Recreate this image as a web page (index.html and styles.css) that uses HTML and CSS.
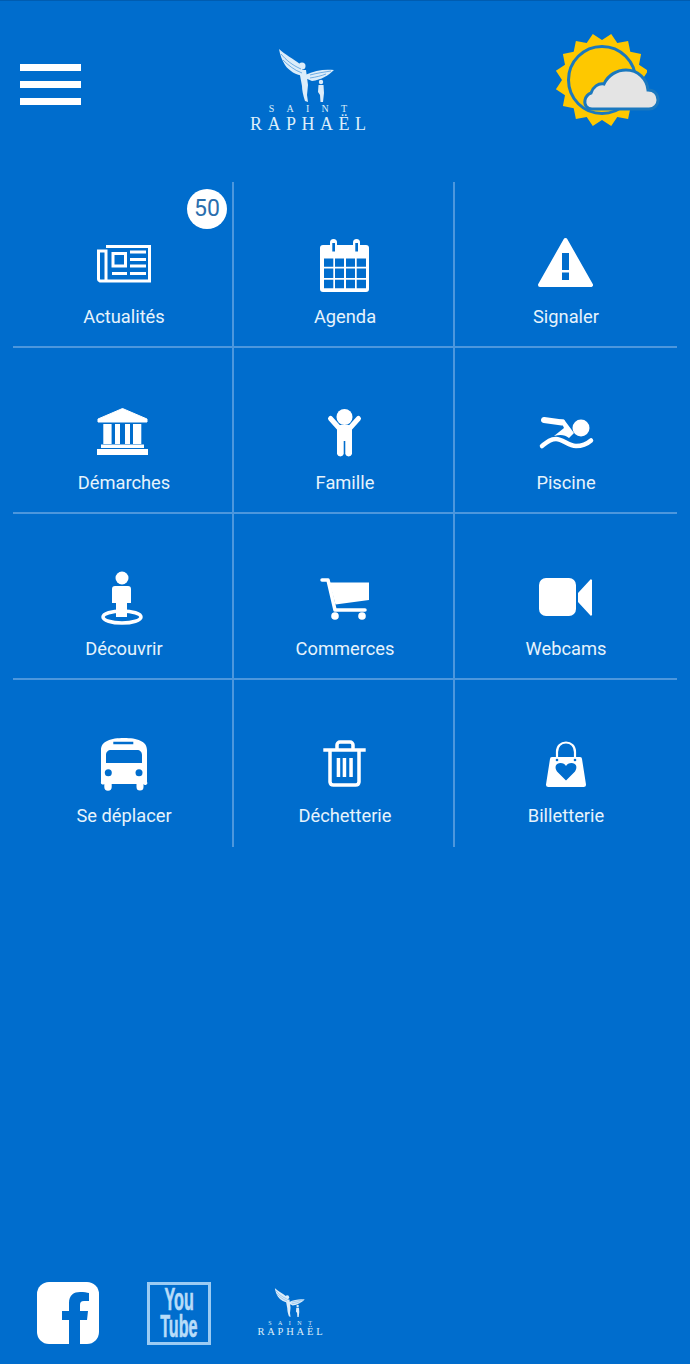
FILE: index.html
```html
<!DOCTYPE html>
<html lang="fr">
<head>
<meta charset="utf-8">
<title>Saint-Raphaël</title>
<link rel="stylesheet" href="styles.css">
</head>
<body>
<svg class="defs" width="0" height="0" aria-hidden="true">
  <defs>
    <symbol id="angel" viewBox="0 0 56 55">
      <g fill="#dcedfa">
        <path d="M0 0C6 6 14 9 22 16L25 27C17 26 10 22 6 16 3 11 1 6 0 0Z"/>
        <circle cx="23" cy="17" r="3.500"/>
        <path d="M26 26C36 21 46 20 55 21 50 26 42 31 33 32L26 29Z"/>
        <path d="M20 21H27L29 36 28 46 29 53 26 52C24 46 23 41 23 37Z"/>
        <circle cx="42" cy="33" r="2.200"/>
        <path d="M39.500 36H44.500L45 44 44 53H41.500L41 46 39 43Z"/>
      </g>
      <g fill="none" stroke="#006dcd" stroke-width=".5">
        <path d="M2 5C7 11 13 16 22 20"/>
        <path d="M4 11C9 16 15 21 23 24"/>
        <path d="M31 26C38 24 46 23 52 22"/>
        <path d="M31 29C37 28 42 27 47 25"/>
      </g>
    </symbol>
  </defs>
</svg>
<main class="page">
  <header class="top">
    <button class="burger" aria-label="Menu"><span></span><span></span><span></span></button>
    <div class="logo">
      <svg class="angel" viewBox="0 0 56 55"><use href="#angel"/></svg>
      <div class="saint">SAINT</div>
      <div class="raphael">RAPHAËL</div>
    </div>
    <svg class="weather" viewBox="0 0 110 100">
      <polygon transform="translate(48 47)" fill="#fec800" points="0,-40 9.2,-46.1 15.3,-37 26.1,-39.1 28.3,-28.3 39.1,-26.1 37,-15.3 46.1,-9.2 40,0 46.1,9.2 37,15.3 39.1,26.1 28.3,28.3 26.1,39.1 15.3,37 9.2,46.1 0,40 -9.2,46.1 -15.3,37 -26.1,39.1 -28.3,28.3 -39.1,26.1 -37,15.3 -46.1,9.2 -40,0 -46.1,-9.2 -37,-15.3 -39.1,-26.1 -28.3,-28.3 -26.1,-39.1 -15.3,-37 -9.2,-46.1"/>
      <circle cx="48" cy="47" r="33.500" fill="#fec800" stroke="#1a78bf" stroke-width="3"/>
      <rect x="76" y="76" width="34" height="24" fill="#006dcd"/>
      <rect x="93" y="36" width="17" height="42" fill="#006dcd"/>
      <path d="M38 76C33 76 30 72 31 67 32 63 34 61 37 60 39 54 44 50 50 51 54 42 63 37 72 37 84 37 93 46 94 57 100 57 104 61 104 67 104 72 100 76 95 76Z" fill="#e4e4e4" stroke="#1a78bf" stroke-width="3"/>
    </svg>
  </header>

  <nav class="grid">
    <a class="cell">
      <span class="badge">50</span>
      <svg class="icon" viewBox="0 0 60 60">
        <g fill="none" stroke="#fff" stroke-width="3">
          <path d="M12 11.500H55.500V46H6A2 2 0 0 1 4.500 44V16H12V46"/>
          <rect x="19" y="18.500" width="12.500" height="12.500"/>
        </g>
        <path d="M36 17H52M36 24.500H52M36 31H52M18 38.500H33M36 38.500H52" stroke="#fff" stroke-width="3"/>
      </svg>
      <span class="label">Actualités</span>
    </a>
    <a class="cell">
      <svg class="icon" viewBox="0 0 60 60">
        <path d="M5 13A3 3 0 0 1 8 10H51A3 3 0 0 1 54 13V54A3 3 0 0 1 51 57H8A3 3 0 0 1 5 54Z" fill="#fff"/>
        <rect x="15" y="4" width="7" height="14" rx="3.500" fill="#fff"/>
        <rect x="38" y="4" width="7" height="14" rx="3.500" fill="#fff"/>
        <path d="M17.300 8H20V16.500H17.300ZM40.300 8H43V16.500H40.300Z" fill="#006dcd"/>
        <path d="M9 23.500H18.300V31.700H9ZM20 23.500H29V31.700H20ZM31 23.500H40V31.700H31ZM41.700 23.500H51V31.700H41.700ZM9 33.500H18.300V43H9ZM20 33.500H29V43H20ZM31 33.500H40V43H31ZM41.700 33.500H51V43H41.700ZM9 44.700H18.300V53.300H9ZM20 44.700H29V53.300H20ZM31 44.700H40V53.300H31ZM41.700 44.700H51V53.300H41.700Z" fill="#006dcd"/>
      </svg>
      <span class="label">Agenda</span>
    </a>
    <a class="cell">
      <svg class="icon" viewBox="0 0 60 60">
        <path d="M29.500 5 55 50H4Z" fill="#fff" stroke="#fff" stroke-width="4" stroke-linejoin="round"/>
        <path d="M26 18H33V35H26ZM26 37.500H33V45H26Z" fill="#006dcd"/>
      </svg>
      <span class="label">Signaler</span>
    </a>

    <a class="cell">
      <svg class="icon" viewBox="0 0 60 60">
        <path d="M28.500 7.500 53 18V21H4V18Z" fill="#fff" stroke="#fff" stroke-linejoin="round"/>
        <path d="M9.300 23H17.600V43H9.300ZM21 23H26V43H21ZM31 23H36V43H31ZM39 23H47.300V43H39ZM7 43.500H50V47H7ZM3 48H54V54H3Z" fill="#fff"/>
      </svg>
      <span class="label">Démarches</span>
    </a>
    <a class="cell">
      <svg class="icon" viewBox="0 0 60 60">
        <circle cx="29.500" cy="16" r="8" fill="#fff"/>
        <path d="M15.500 17.500 24 27M43.500 17.500 35 27" stroke="#fff" stroke-width="5" stroke-linecap="round"/>
        <path d="M22 27A4 4 0 0 1 26 24H33A4 4 0 0 1 37 27V53A3.500 3.500 0 0 1 30.300 53V40H28.700V53A3.500 3.500 0 0 1 22 53Z" fill="#fff"/>
      </svg>
      <span class="label">Famille</span>
    </a>
    <a class="cell">
      <svg class="icon" viewBox="0 0 60 60">
        <circle cx="45" cy="27" r="8.500" fill="#fff"/>
        <path d="M8 19 26 21.500" stroke="#fff" stroke-width="6" stroke-linecap="round"/>
        <path d="M24 18.500H28L38 32 33 37C29 34 25 33 18 35L28 27Z" fill="#fff"/>
        <path d="M6 45C11 41 14 38 20 38 27 38 32 45 40 45 46 45 51 43 55 39.500" fill="none" stroke="#fff" stroke-width="4.500" stroke-linecap="round"/>
      </svg>
      <span class="label">Piscine</span>
    </a>

    <a class="cell">
      <svg class="icon" viewBox="0 0 60 60">
        <circle cx="28" cy="11" r="6.500" fill="#fff"/>
        <ellipse cx="28" cy="50" rx="19" ry="6" fill="none" stroke="#fff" stroke-width="3.500"/>
        <path d="M18 22A3 3 0 0 1 21 19H34A3 3 0 0 1 37 22V36H33V50H22V36H18Z" fill="#fff"/>
      </svg>
      <span class="label">Découvrir</span>
    </a>
    <a class="cell">
      <svg class="icon" viewBox="0 0 60 60">
        <path d="M7 13H13L20 43H50" fill="none" stroke="#fff" stroke-width="3.500" stroke-linecap="round" stroke-linejoin="round"/>
        <path d="M14.500 15.500H54V33L20.500 37.500Z" fill="#fff"/>
        <circle cx="20" cy="49" r="3.800" fill="#fff"/>
        <circle cx="47" cy="49" r="3.800" fill="#fff"/>
      </svg>
      <span class="label">Commerces</span>
    </a>
    <a class="cell">
      <svg class="icon" viewBox="0 0 60 60">
        <rect x="3" y="11" width="37" height="38" rx="7" fill="#fff"/>
        <path d="M42 26 54 13A1 1 0 0 1 56 14V47A1 1 0 0 1 54 48L42 35Z" fill="#fff"/>
      </svg>
      <span class="label">Webcams</span>
    </a>

    <a class="cell">
      <svg class="icon" viewBox="0 0 60 60">
        <path d="M7 17C7 8 17 5 30 5 43 5 53 8 53 17V49A2 2 0 0 1 49.500 51V54A3.500 3.500 0 0 1 42.500 54V51H17.700V54A3.500 3.500 0 0 1 10.300 54V51A2 2 0 0 1 7 49Z" fill="#fff"/>
        <path d="M12 22C12 19 14 17 17 17H43C46 17 48 19 48 22V30H12ZM19.300 8.700H39.300V11.300H19.300Z" fill="#006dcd"/>
        <circle cx="14.300" cy="39.700" r="3.500" fill="#006dcd"/>
        <circle cx="45" cy="39.700" r="3.500" fill="#006dcd"/>
      </svg>
      <span class="label">Se déplacer</span>
    </a>
    <a class="cell">
      <svg class="icon" viewBox="0 0 60 60">
        <g fill="none" stroke="#fff" stroke-width="3.500">
          <path d="M8.300 17H50.700"/>
          <path d="M22 17V12A3 3 0 0 1 25 9H35A3 3 0 0 1 38 12V17"/>
          <path d="M15 18V49A3.500 3.500 0 0 0 18.500 52H40.500A3.500 3.500 0 0 0 44 49V18"/>
        </g>
        <path d="M21.700 25H25.200V44H21.700ZM27.700 25H31.200V44H27.700ZM34.300 25H37.800V44H34.300Z" fill="#fff"/>
      </svg>
      <span class="label">Déchetterie</span>
    </a>
    <a class="cell">
      <svg class="icon" viewBox="0 0 60 60">
        <path d="M16 24H44A2 2 0 0 1 46 26L50 51.500A2.500 2.500 0 0 1 47.500 54H12.500A2.500 2.500 0 0 1 10 51.500L14 26A2 2 0 0 1 16 24Z" fill="#fff"/>
        <path d="M21 27V19C21 13 25 9.500 30 9.500 35 9.500 39 13 39 19V27" fill="none" stroke="#fff" stroke-width="2.200"/>
        <circle cx="21" cy="27" r="1.300" fill="#006dcd"/>
        <circle cx="39" cy="27" r="1.300" fill="#006dcd"/>
        <path d="M30 47.500 21 38.500C18 34 20 30 24.500 30 27 30 29 31 30 33 31 31 33 30 35.500 30 40 30 42 34 39 38.500Z" fill="#006dcd"/>
      </svg>
      <span class="label">Billetterie</span>
    </a>
  </nav>

  <footer class="foot">
    <svg class="fb" viewBox="0 0 62 62">
      <rect width="62" height="62" rx="12" fill="#fff"/>
      <path d="M32 62V38H25V29H32V21C32 13 37 10 43 10 47 10 50 10.500 52 11V19H47C44 19 43 20.500 43 23V29H51L50 38H43V62Z" fill="#006dcd"/>
    </svg>
    <div class="yt"><span class="yt-word">You</span><span class="yt-word">Tube</span></div>
    <div class="logo logo-small">
      <svg class="angel" viewBox="0 0 56 55"><use href="#angel"/></svg>
      <div class="saint">SAINT</div>
      <div class="raphael">RAPHAËL</div>
    </div>
  </footer>
</main>
</body>
</html>
```

FILE: styles.css
```css
* { box-sizing: border-box; }
html, body { margin: 0; padding: 0; }
body { background: #006dcd; }
.defs { position: absolute; }
.page {
  height: 1364px;
  display: flex;
  flex-direction: column;
  background: #006dcd;
  border-top: 1px solid #005cb0;
  overflow: hidden;
}
.top {
  height: 181px;
  flex: none;
  display: flex;
  align-items: flex-start;
  justify-content: space-between;
  padding: 31px 26px 0 20px;
}
.burger {
  width: 61px;
  margin: 32px 0 0;
  padding: 0;
  border: 0;
  background: none;
  display: flex;
  flex-direction: column;
  gap: 10px;
}
.burger span { display: block; height: 7px; background: #fff; }
.logo {
  width: 116px;
  margin-top: 17px;
  margin-left: -19px;
  display: flex;
  flex-direction: column;
  align-items: center;
  color: #dcedfa;
  font-family: "Liberation Serif", serif;
}
.angel { display: block; width: 56px; height: 55px; margin-left: -2px; }
.saint { font-size: 10px; line-height: 10px; letter-spacing: 12.2px; margin-right: -12px; }
.raphael { font-size: 18px; line-height: 17px; letter-spacing: 5.5px; margin-right: -5.5px; margin-top: 2px; white-space: nowrap; }
.weather { display: block; width: 110px; height: 100px; margin-top: 1px; }
.grid {
  width: 664px;
  margin-left: 13px;
  flex: none;
  display: grid;
  grid-template-columns: 221px 221px 222px;
  grid-template-rows: 166px 166px 166px 167px;
}
.cell {
  position: relative;
  display: flex;
  flex-direction: column;
  align-items: center;
  padding-top: 53px;
  padding-left: 3px;
  border-right: 2px solid #4c97dd;
  border-bottom: 2px solid #4c97dd;
}
.cell:nth-child(3n) { border-right: 0; padding-left: 0; }
.cell:nth-last-child(-n+3) { border-bottom: 0; }
.icon { display: block; width: 60px; height: 60px; flex: none; }
.label {
  margin-top: 11px;
  color: #e6f3fc;
  font: 400 18.3px/22px Roboto, sans-serif;
  white-space: nowrap;
}
.cell:nth-last-child(-n+3) .label { margin-top: 12px; }
.badge {
  position: absolute;
  top: 7px;
  right: 5px;
  width: 40px;
  height: 40px;
  border-radius: 50%;
  background: #fff;
  color: #2a6ead;
  font: 400 23px/40px Roboto, sans-serif;
  text-align: center;
}
.foot {
  margin-top: auto;
  height: 82px;
  flex: none;
  display: flex;
  align-items: flex-start;
  padding-left: 37px;
}
.fb { display: block; width: 62px; height: 62px; flex: none; }
.yt {
  width: 64px;
  height: 63px;
  margin-left: 48px;
  flex: none;
  border: 3px solid #9bcbf3;
  display: flex;
  flex-direction: column;
  align-items: center;
  padding-top: 1px;
}
.yt-word {
  color: #b8dcf9;
  font: 700 31px/27px "Liberation Sans", sans-serif;
  -webkit-text-stroke: .7px #b8dcf9;
  transform: scaleX(.52);
  white-space: nowrap;
  height: 27px;
}
.logo-small {
  width: 66px;
  margin: 6px 0 0 46px;
}
.logo-small .angel { width: 32px; height: 30px; margin-left: 0; }
.logo-small .saint { font-size: 6px; line-height: 6px; letter-spacing: 6.5px; margin-right: -6.5px; margin-top: 2px; }
.logo-small .raphael { font-size: 10.5px; line-height: 10px; letter-spacing: 2.8px; margin-right: -2.8px; margin-top: 1px; }
```
